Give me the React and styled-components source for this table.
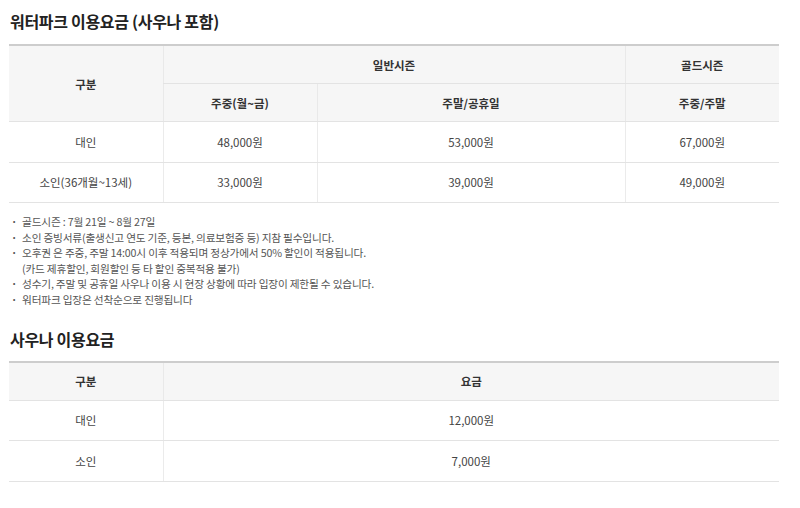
import React from 'react'
import styled, { createGlobalStyle } from 'styled-components'

const GlobalStyle = createGlobalStyle`
  body {
    margin: 0;
    background: #fff;
    font-family: "Noto Sans CJK KR", "Noto Sans", sans-serif;
    color: #333;
  }
`

const Page = styled.div`
  width: 770px;
  padding: 10px 21px 0 9px;
`

const Title = styled.h2`
  margin: ${(p) => p.$top || 0}px 0 0 1px;
  font-size: 16px;
  line-height: 22px;
  font-weight: 700;
  color: #222;
  letter-spacing: -0.3px;
`

const Table = styled.table`
  width: 100%;
  margin-top: ${(p) => p.$top}px;
  border-collapse: collapse;
  table-layout: fixed;
  border-top: 2px solid #cdcdcd;
`

const Th = styled.th`
  height: 37px;
  padding: 0;
  background: #f6f6f6;
  font-size: 11.5px;
  font-weight: 700;
  color: #333;
  border-bottom: 1px solid #e3e3e3;
  border-left: ${(p) => (p.$first ? 'none' : '1px solid #e9e9e9')};
`

const Td = styled.td`
  height: 39.5px;
  padding: 0;
  text-align: center;
  font-size: 11.5px;
  color: #444;
  border-bottom: 1px solid #e3e3e3;
  border-left: 1px solid #ebebeb;
  &:first-child {
    border-left: none;
  }
`

const Notes = styled.ul`
  margin: 11px 0 0;
  padding: 0;
  list-style: none;
`

const Note = styled.li`
  position: relative;
  padding-left: 13px;
  font-size: 10.7px;
  line-height: 15.5px;
  height: ${(p) => (p.$lines || 1) * 15.6}px;
  color: #555;
  letter-spacing: -0.2px;
  &::before {
    content: '·';
    position: absolute;
    left: 2px;
    top: 0;
    font-weight: 700;
  }
`

const Sub = styled.span`
  display: block;
`

const waterRows = [
  ['대인', '48,000원', '53,000원', '67,000원'],
  ['소인(36개월~13세)', '33,000원', '39,000원', '49,000원'],
]

const saunaRows = [
  ['대인', '12,000원'],
  ['소인', '7,000원'],
]

export default function App() {
  return (
    <Page>
      <GlobalStyle />
      <Title>워터파크 이용요금 (사우나 포함)</Title>
      <Table $top={12}>
        <colgroup>
          <col style={{ width: '20%' }} />
          <col style={{ width: '20%' }} />
          <col style={{ width: '40%' }} />
          <col style={{ width: '20%' }} />
        </colgroup>
        <thead>
          <tr>
            <Th rowSpan={2} $first>구분</Th>
            <Th colSpan={2}>일반시즌</Th>
            <Th>골드시즌</Th>
          </tr>
          <tr>
            <Th>주중(월~금)</Th>
            <Th>주말/공휴일</Th>
            <Th>주중/주말</Th>
          </tr>
        </thead>
        <tbody>
          {waterRows.map((r) => (
            <tr key={r[0]}>
              {r.map((c, i) => (
                <Td key={i}>{c}</Td>
              ))}
            </tr>
          ))}
        </tbody>
      </Table>

      <Notes>
        <Note>골드시즌 : 7월 21일 ~ 8월 27일</Note>
        <Note>소인 증빙서류(출생신고 연도 기준, 등본, 의료보험증 등) 지참 필수입니다.</Note>
        <Note $lines={2}>
          오후권 은 주중, 주말 14:00시 이후 적용되며 정상가에서 50% 할인이 적용됩니다.
          <Sub>(카드 제휴할인, 회원할인 등 타 할인 중복적용 불가)</Sub>
        </Note>
        <Note>성수기, 주말 및 공휴일 사우나 이용 시 현장 상황에 따라 입장이 제한될 수 있습니다.</Note>
        <Note>워터파크 입장은 선착순으로 진행됩니다</Note>
      </Notes>

      <Title $top={20}>사우나 이용요금</Title>
      <Table $top={11}>
        <colgroup>
          <col style={{ width: '20%' }} />
          <col style={{ width: '80%' }} />
        </colgroup>
        <thead>
          <tr>
            <Th $first>구분</Th>
            <Th>요금</Th>
          </tr>
        </thead>
        <tbody>
          {saunaRows.map((r) => (
            <tr key={r[0]}>
              {r.map((c, i) => (
                <Td key={i}>{c}</Td>
              ))}
            </tr>
          ))}
        </tbody>
      </Table>
    </Page>
  )
}
